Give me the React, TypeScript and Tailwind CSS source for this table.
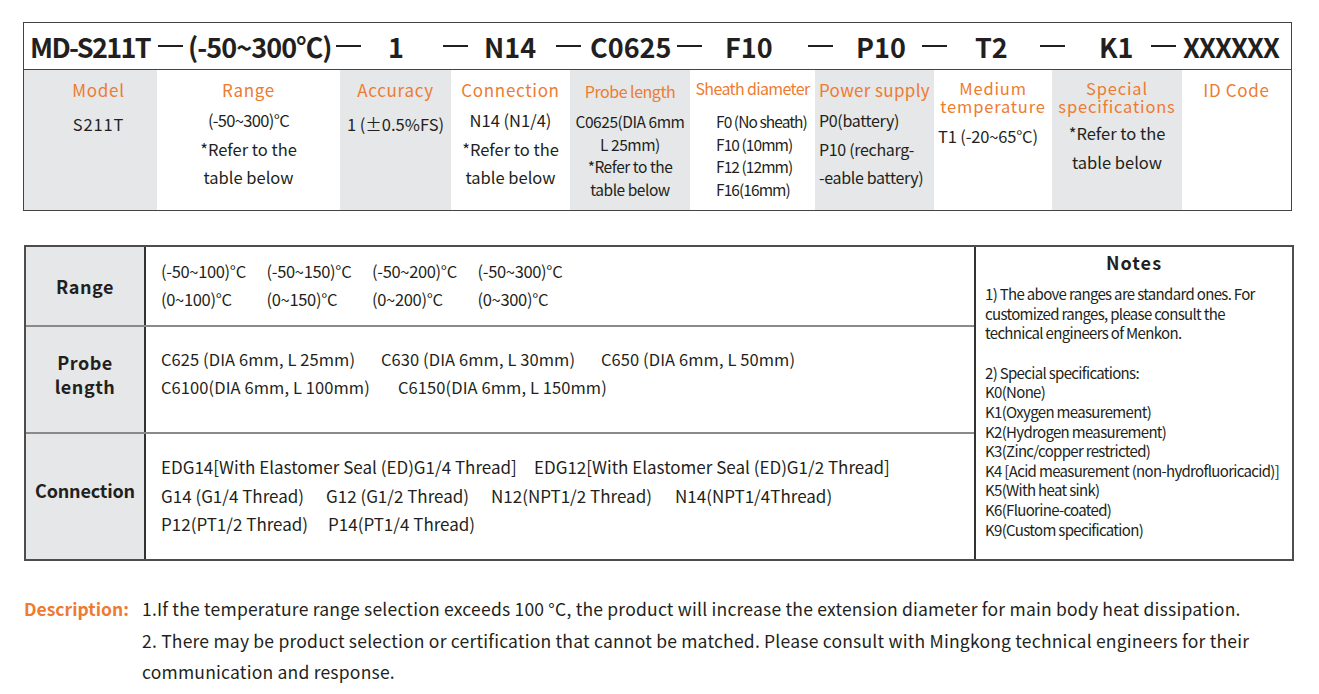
import React from "react";

const ink = "text-[#231f20]";
const orange = "text-[#ee7b30]";

const HeaderToken: React.FC<{ w: string; children: React.ReactNode; className?: string }> = ({ w, children, className = "" }) => (
  <span className={`${w} shrink-0 whitespace-nowrap ${className}`}>{children}</span>
);

const Dash: React.FC<{ w: string }> = ({ w }) => (
  <span className={`${w} shrink-0 flex items-center`}>
    <span className="block w-[25px] h-[2.5px] bg-[#231f20]" />
  </span>
);

const CodeHeader: React.FC = () => (
  <div className={`h-[47px] flex items-center pl-[6px] border-b border-[#444] text-[27px] font-bold leading-none ${ink}`}>
    <HeaderToken w="w-[128px]" className="tracking-[-0.06em]">MD-S211T</HeaderToken>
    <Dash w="w-[30px]" />
    <HeaderToken w="w-[148px]" className="tracking-[-0.035em]">(-50~300℃)</HeaderToken>
    <Dash w="w-[52px]" />
    <HeaderToken w="w-[55px]">1</HeaderToken>
    <Dash w="w-[41px]" />
    <HeaderToken w="w-[72px]">N14</HeaderToken>
    <Dash w="w-[34px]" />
    <HeaderToken w="w-[87px]">C0625</HeaderToken>
    <Dash w="w-[48px]" />
    <HeaderToken w="w-[83px]">F10</HeaderToken>
    <Dash w="w-[48px]" />
    <HeaderToken w="w-[66px]">P10</HeaderToken>
    <Dash w="w-[53px]" />
    <HeaderToken w="w-[65px]">T2</HeaderToken>
    <Dash w="w-[59px]" />
    <HeaderToken w="w-[52px]">K1</HeaderToken>
    <Dash w="w-[32px]" />
    <HeaderToken w="w-[100px]" className="tracking-[-0.035em]">XXXXXX</HeaderToken>
  </div>
);

// size and tracking come in through className so they never clash
const Label: React.FC<{ children: React.ReactNode; className: string }> = ({ children, className }) => (
  <div className={`${orange} whitespace-nowrap ${className}`}>{children}</div>
);

const CodeColumns: React.FC = () => (
  <div className={`grid grid-cols-[133px_183px_111px_119px_120px_125px_119px_118px_130px_1fr] h-[140px] ${ink}`}>
    <div className="bg-[#e6e7e8] flex flex-col items-center pt-[11px] pl-[16px]">
      <Label className="text-[17px] leading-[18px] tracking-[0.04em]">Model</Label>
      <div className="text-[16.5px] mt-[13px] tracking-[0.05em]">S211T</div>
    </div>
    <div className="flex flex-col items-center pt-[11px]">
      <Label className="text-[17px] leading-[18px] tracking-[0.04em]">Range</Label>
      <div className="text-[16.5px] leading-[28.5px] mt-[7px] text-center">
        <div className="tracking-[-0.04em]">(-50~300)°C</div>
        <div>*Refer to the</div>
        <div>table below</div>
      </div>
    </div>
    <div className="bg-[#e6e7e8] flex flex-col items-center pt-[11px]">
      <Label className="text-[17px] leading-[18px] tracking-[0.04em]">Accuracy</Label>
      <div className="text-[16.5px] mt-[13px] whitespace-nowrap">1 (±0.5%FS)</div>
    </div>
    <div className="flex flex-col items-center pt-[11px]">
      <Label className="text-[17px] leading-[18px] tracking-[0.04em]">Connection</Label>
      <div className="text-[16.5px] leading-[28.5px] mt-[7px] text-center">
        <div>N14 (N1/4)</div>
        <div>*Refer to the</div>
        <div>table below</div>
      </div>
    </div>
    <div className="bg-[#e6e7e8] flex flex-col items-center pt-[12px]">
      <Label className="text-[16px] leading-[18px] tracking-[-0.03em]">Probe length</Label>
      <div className="text-[15.5px] leading-[22.7px] mt-[10px] text-center tracking-[-0.03em] whitespace-nowrap">
        <div>C0625(DIA 6mm</div>
        <div>L 25mm)</div>
        <div>*Refer to the</div>
        <div>table below</div>
      </div>
    </div>
    <div className="flex flex-col items-center pt-[9px]">
      <Label className="text-[16px] leading-[18px] tracking-[-0.04em]">Sheath diameter</Label>
      <div className="self-start pl-[26px] text-[15.5px] leading-[22.7px] mt-[13px] tracking-[-0.06em] whitespace-nowrap">
        <div>F0 (No sheath)</div>
        <div>F10 (10mm)</div>
        <div>F12 (12mm)</div>
        <div>F16(16mm)</div>
      </div>
    </div>
    <div className="bg-[#e6e7e8] flex flex-col items-center pt-[11px]">
      <Label className="text-[17px] leading-[18px] tracking-[0.02em]">Power supply</Label>
      <div className="self-start pl-[4px] text-[16px] leading-[28.5px] mt-[7px] tracking-[-0.02em] whitespace-nowrap">
        <div>P0(battery)</div>
        <div>P10 (recharg-</div>
        <div>-eable battery)</div>
      </div>
    </div>
    <div className="flex flex-col items-center pt-[10px]">
      <Label className="text-[16.5px] leading-[17.5px] tracking-[0.05em] text-center">
        Medium
        <br />
        temperature
      </Label>
      <div className="self-start pl-[4px] text-[16.5px] mt-[9px] whitespace-nowrap tracking-[-0.01em]">T1 (-20~65°C)</div>
    </div>
    <div className="bg-[#e6e7e8] flex flex-col items-center pt-[10px]">
      <Label className="text-[16.5px] leading-[17.5px] tracking-[0.05em] text-center">
        Special
        <br />
        specifications
      </Label>
      <div className="text-[16.5px] leading-[28.5px] mt-[4px] text-center">
        <div>*Refer to the</div>
        <div>table below</div>
      </div>
    </div>
    <div className="flex flex-col items-center pt-[11px]">
      <Label className="text-[17px] leading-[18px] tracking-[0.04em]">ID Code</Label>
    </div>
  </div>
);

const rangeItems = [
  ["(-50~100)°C", "(-50~150)°C", "(-50~200)°C", "(-50~300)°C"],
  ["(0~100)°C", "(0~150)°C", "(0~200)°C", "(0~300)°C"],
];

const notes = [
  "K0(None)",
  "K1(Oxygen measurement)",
  "K2(Hydrogen measurement)",
  "K3(Zinc/copper restricted)",
  "K4 [Acid measurement (non-hydrofluoricacid)]",
  "K5(With heat sink)",
  "K6(Fluorine-coated)",
  "K9(Custom specification)",
];

const OptionsTable: React.FC = () => (
  <div className={`ml-[24px] w-[1270px] h-[316px] border-2 border-[#4d4d4d] flex ${ink}`}>
    <div className="w-[950px] flex flex-col border-r-2 border-[#333]">
      <div className="h-[80px] flex border-b-2 border-[#8a8a8a]">
        <div className="w-[120px] shrink-0 bg-[#e6e7e8] border-r-2 border-[#333] flex items-center justify-center text-[18px] font-bold tracking-[0.03em]">
          Range
        </div>
        <div className="pl-[15px] pt-[10px] text-[16.5px] leading-[28px] tracking-[-0.02em] whitespace-nowrap">
          {rangeItems.map((row, i) => (
            <div key={i} className="flex">
              {row.map((r) => (
                <span key={r} className="w-[105.5px]">{r}</span>
              ))}
            </div>
          ))}
        </div>
      </div>
      <div className="h-[107px] flex border-b-2 border-[#8a8a8a]">
        <div className="w-[120px] shrink-0 bg-[#e6e7e8] border-r-2 border-[#333] flex flex-col items-center pt-[23px] text-[18px] leading-[24px] font-bold tracking-[0.03em]">
          <span>Probe</span>
          <span>length</span>
        </div>
        <div className="pl-[15px] pt-[18px] text-[16.5px] leading-[28px] tracking-[0.005em] whitespace-nowrap">
          <div className="flex">
            <span className="w-[220px]">C625 (DIA 6mm, L 25mm)</span>
            <span className="w-[220px]">C630 (DIA 6mm, L 30mm)</span>
            <span>C650 (DIA 6mm, L 50mm)</span>
          </div>
          <div className="flex">
            <span className="w-[237px]">C6100(DIA 6mm, L 100mm)</span>
            <span>C6150(DIA 6mm, L 150mm)</span>
          </div>
        </div>
      </div>
      <div className="flex-1 flex">
        <div className="w-[120px] shrink-0 bg-[#e6e7e8] border-r-2 border-[#333] flex items-center justify-center pb-[12px] text-[18px] font-bold tracking-[-0.01em]">
          Connection
        </div>
        <div className="pl-[15px] pt-[19px] text-[17px] leading-[28.5px] whitespace-nowrap">
          <div className="flex">
            <span className="w-[373px]">EDG14[With Elastomer Seal (ED)G1/4 Thread]</span>
            <span>EDG12[With Elastomer Seal (ED)G1/2 Thread]</span>
          </div>
          <div className="flex">
            <span className="w-[165px]">G14 (G1/4 Thread)</span>
            <span className="w-[165px]">G12 (G1/2 Thread)</span>
            <span className="w-[184px]">N12(NPT1/2 Thread)</span>
            <span>N14(NPT1/4Thread)</span>
          </div>
          <div className="flex">
            <span className="w-[167px]">P12(PT1/2 Thread)</span>
            <span>P14(PT1/4 Thread)</span>
          </div>
        </div>
      </div>
    </div>
    <div className="flex-1 pl-[9px] pt-[4px] text-[15px] leading-[19.6px] tracking-[-0.045em] whitespace-nowrap">
      <div className="text-center text-[18px] font-bold tracking-[0.06em] leading-[22px] pr-[9px]">Notes</div>
      <div className="mt-[11px]">
        1) The above ranges are standard ones. For
        <br />
        customized ranges, please consult the
        <br />
        technical engineers of Menkon.
      </div>
      <div className="mt-[20px]">2) Special specifications:</div>
      {notes.map((n) => (
        <div key={n}>{n}</div>
      ))}
    </div>
  </div>
);

const Description: React.FC = () => (
  <div className={`mt-[32px] pl-[24px] flex text-[17.5px] leading-[31.5px] ${ink}`}>
    <div className={`w-[118px] shrink-0 font-bold ${orange}`}>Description:</div>
    <div className="w-[1160px] tracking-[0.012em] whitespace-nowrap">
      <div>1.If the temperature range selection exceeds 100 °C, the product will increase the extension diameter for main body heat dissipation.</div>
      <div>
        2. There may be product selection or certification that cannot be matched. Please consult with Mingkong technical engineers for their
      </div>
      <div>communication and response.</div>
    </div>
  </div>
);

export default function App() {
  return (
    <div className="w-[1319px] h-[694px] bg-white overflow-hidden font-['Noto_Sans_CJK_SC','Noto_Sans',sans-serif]">
      <div className="pt-[22px]">
        <div className="ml-[23px] w-[1269px] border border-[#444] bg-white">
          <CodeHeader />
          <CodeColumns />
        </div>
      </div>
      <div className="mt-[34px]">
        <OptionsTable />
      </div>
      <Description />
    </div>
  );
}
